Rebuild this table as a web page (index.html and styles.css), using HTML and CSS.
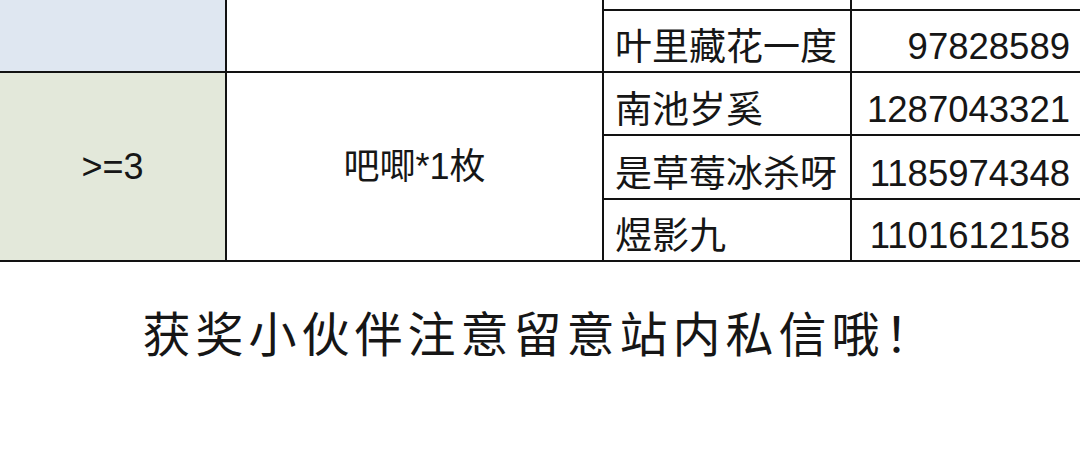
FILE: index.html
```html
<!DOCTYPE html>
<html lang="zh-CN">
<head>
<meta charset="utf-8">
<title>获奖名单</title>
<link rel="stylesheet" href="styles.css">
</head>
<body>
<div class="page">
  <div class="sheet">
    <div class="cell tier tier-blue span-a"></div>
    <div class="cell prize span-a"></div>
    <div class="cell name r0"></div>
    <div class="cell uid r0"></div>
    <div class="cell name r1">叶里藏花一度</div>
    <div class="cell uid r1">97828589</div>

    <div class="cell tier tier-green span-b">&gt;=3</div>
    <div class="cell prize span-b">吧唧*1枚</div>
    <div class="cell name r2">南池岁奚</div>
    <div class="cell uid r2">1287043321</div>
    <div class="cell name r3">是草莓冰杀呀</div>
    <div class="cell uid r3">1185974348</div>
    <div class="cell name r4">煜影九</div>
    <div class="cell uid r4">1101612158</div>
  </div>
  <p class="notice">获奖小伙伴注意留意站内私信哦！</p>
</div>
</body>
</html>
```

FILE: styles.css
```css
html, body {
  margin: 0;
  padding: 0;
  background: #ffffff;
}

body {
  width: 1080px;
  height: 475px;
  overflow: hidden;
  font-family: "Liberation Sans", "Noto Sans CJK SC", sans-serif;
  color: #161616;
}

.page {
  width: 1080px;
}

.sheet {
  display: grid;
  grid-template-columns: 225px 375px 246px 228px;
  grid-template-rows: 9px 60px 61px 62px 60px;
  gap: 2px;
  padding: 2px;
  margin: -2px 0 0 -2px;
  width: max-content;
  background: #121212;
}

.cell {
  background: #ffffff;
  font-size: 36px;
  line-height: 1;
  display: flex;
  overflow: hidden;
  white-space: nowrap;
}

.span-a { grid-row: 1 / 3; }
.span-b { grid-row: 3 / 6; }

.tier,
.prize {
  align-items: center;
  justify-content: center;
}

.tier-blue { background: #dfe7f1; }
.tier-green { background: #e3e8da; }

.tier { grid-column: 1; }
.prize { grid-column: 2; }

.name {
  grid-column: 3;
  align-items: flex-end;
  padding: 0 0 5px 11px;
  font-size: 37px;
}

.uid {
  grid-column: 4;
  align-items: flex-end;
  justify-content: flex-end;
  padding: 0 10px 6px 0;
  font-size: 36.5px;
}

.r0 { grid-row: 1; padding-bottom: 0; }
.r1 { grid-row: 2; }
.r2 { grid-row: 3; }
.r3 { grid-row: 4; }
.r4 { grid-row: 5; }

.notice {
  margin: 45px 0 0 0;
  text-align: center;
  font-family: "Noto Sans CJK SC", sans-serif;
  font-size: 48px;
  line-height: 48px;
  letter-spacing: 5px;
  color: #161616;
}
```
